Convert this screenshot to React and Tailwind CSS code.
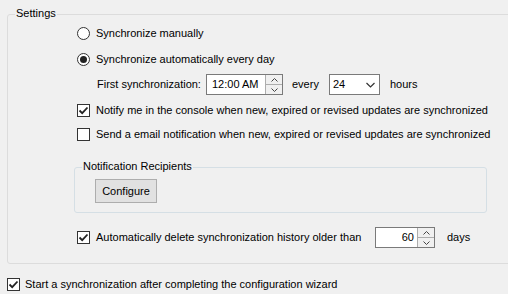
import React from 'react';

const Radio = ({ checked }) => (
    <span className="w-[13px] h-[13px] rounded-full border border-[#333] bg-white flex items-center justify-center shrink-0">
        {checked && <span className="w-[7px] h-[7px] rounded-full bg-[#222]" />}
    </span>
);

const Check = ({ checked }) => (
    <span className="w-[13px] h-[13px] border border-[#333] bg-white flex items-center justify-center shrink-0">
        {checked && (
            <svg width="11" height="11" viewBox="0 0 11 11">
                <path d="M1.5 5.5 L4.2 8.2 L9.5 2.5" fill="none" stroke="#222" strokeWidth="1.8" />
            </svg>
        )}
    </span>
);

const Spinner = () => (
    <div className="flex flex-col w-[17px] h-full border-l border-[#adadad]">
        <div className="flex-1 flex items-center justify-center bg-[#f0f0f0] border-b border-[#adadad]">
            <svg width="7" height="4" viewBox="0 0 7 4"><path d="M0.5 3.5 L3.5 0.5 L6.5 3.5" fill="none" stroke="#444" /></svg>
        </div>
        <div className="flex-1 flex items-center justify-center bg-[#f0f0f0]">
            <svg width="7" height="4" viewBox="0 0 7 4"><path d="M0.5 0.5 L3.5 3.5 L6.5 0.5" fill="none" stroke="#444" /></svg>
        </div>
    </div>
);

export default function App() {
    return (
        <div className="w-[508px] h-[294px] bg-[#f0f0f0] overflow-hidden text-[11px] text-black leading-none whitespace-nowrap" style={{ fontFamily: '"Liberation Sans", Arial, sans-serif' }}>
            {/* Settings group */}
            <div className="relative mt-[14px] ml-[7px] w-[530px] h-[250px] border border-[#dcdcdc] rounded-[3px] pl-[69px]">
                <span className="absolute left-[7px] top-[-7px] px-[1px] bg-[#f0f0f0]">Settings</span>

                <div className="mt-[8px] h-[20px] flex items-center gap-[6px]">
                    <Radio />
                    <span>Synchronize manually</span>
                </div>
                <div className="mt-[6px] h-[20px] flex items-center gap-[6px]">
                    <Radio checked />
                    <span>Synchronize automatically every day</span>
                </div>

                <div className="mt-[5px] h-[21px] flex items-center">
                    <span className="ml-[20px] w-[109px]">First synchronization:</span>
                    <div className="w-[77px] h-[21px] flex border border-[#7a7a7a] bg-white">
                        <span className="flex-1 flex items-center pl-[5px]">12:00 AM</span>
                        <Spinner />
                    </div>
                    <span className="ml-[9px] w-[37px]">every</span>
                    <div className="w-[51px] h-[21px] flex items-center justify-between border border-[#7a7a7a] bg-white pl-[3px] pr-[4px]">
                        <span>24</span>
                        <svg width="9" height="6" viewBox="0 0 9 6"><path d="M0.5 1 L4.5 5 L8.5 1" fill="none" stroke="#333" strokeWidth="1.2" /></svg>
                    </div>
                    <span className="ml-[10px]">hours</span>
                </div>

                <div className="mt-[5px] h-[20px] flex items-center gap-[6px]">
                    <Check checked />
                    <span>Notify me in the console when new, expired or revised updates are synchronized</span>
                </div>
                <div className="mt-[4px] h-[20px] flex items-center gap-[6px]">
                    <Check />
                    <span>Send a email notification when new, expired or revised updates are synchronized</span>
                </div>

                {/* Notification Recipients group */}
                <div className="relative mt-[23px] ml-[-3px] w-[413px] h-[46px] border border-[#d5dfe5] rounded-[3px]">
                    <span className="absolute left-[7px] top-[-7px] px-[1px] bg-[#f0f0f0]">Notification Recipients</span>
                    <button className="mt-[11px] ml-[20px] w-[62px] h-[24px] bg-[#e1e1e1] border border-[#adadad] text-[11px] flex items-center justify-center">
                        Configure
                    </button>
                </div>

                <div className="mt-[14px] h-[21px] flex items-center">
                    <Check checked />
                    <span className="ml-[6px] w-[279px]">Automatically delete synchronization history older than</span>
                    <div className="w-[60px] h-[21px] flex border border-[#7a7a7a] bg-white">
                        <span className="flex-1 flex items-center justify-end pr-[3px]">60</span>
                        <Spinner />
                    </div>
                    <span className="ml-[12px]">days</span>
                </div>
            </div>

            <div className="mt-[10px] ml-[7px] h-[20px] flex items-center gap-[5px]">
                <Check checked />
                <span>Start a synchronization after completing the configuration wizard</span>
            </div>
        </div>
    );
}
